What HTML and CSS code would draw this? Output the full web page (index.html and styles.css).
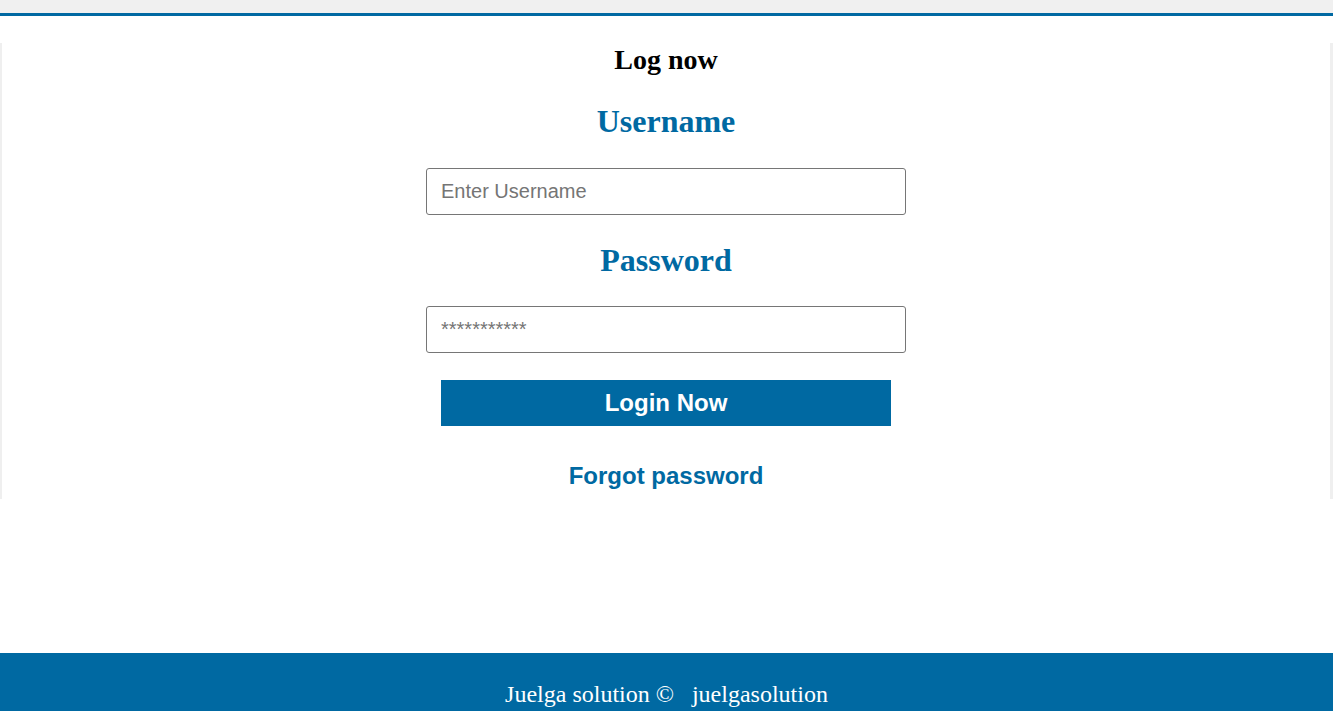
FILE: index.html
```html
<!DOCTYPE html>
<html lang="en">
<head>
<meta charset="utf-8">
<title>Log now</title>
<link rel="stylesheet" href="styles.css">
</head>
<body>
<div class="topbar"></div>
<main class="panel">
  <h2 class="title">Log now</h2>
  <h1 class="label">Username</h1>
  <input class="field" type="text" placeholder="Enter Username">
  <h1 class="label label-gap">Password</h1>
  <input class="field field-gap" type="password" placeholder="***********">
  <button class="login" type="button">Login Now</button>
  <a class="forgot" href="#">Forgot password</a>
</main>
<footer class="footer">Juelga solution ©&nbsp;&nbsp; juelgasolution</footer>
</body>
</html>
```
FILE: styles.css
```css
html, body {
  margin: 0;
  padding: 0;
  background: #ffffff;
  font-family: "Liberation Serif", "Times New Roman", serif;
  overflow: hidden;
}

.topbar {
  height: 13px;
  background: #f0f0f0;
  border-bottom: 3px solid #0069a2;
}

.panel {
  margin-top: 27px;
  border-left: 2px solid #efefef;
  border-right: 3px solid #efefef;
  padding: 1px 0 9px;
  display: flex;
  flex-direction: column;
  align-items: center;
}

.title {
  margin: 0;
  font-size: 28px;
  font-weight: bold;
  color: #000000;
  line-height: 32px;
}

.label {
  margin: 27px 0 0;
  font-size: 32px;
  font-weight: bold;
  color: #0069a2;
  line-height: 37px;
}

.label-gap {
  margin-top: 27px;
}

.field {
  box-sizing: border-box;
  margin-top: 28px;
  width: 480px;
  height: 47px;
  padding: 0 14px;
  border: 1px solid #767676;
  border-radius: 3px;
  font-family: "Liberation Sans", Arial, sans-serif;
  font-size: 20px;
  color: #333333;
  outline: none;
}

.field-gap {
  margin-top: 27px;
}

.field::placeholder {
  color: #757575;
}

.login {
  margin-top: 27px;
  width: 450px;
  height: 46px;
  border: none;
  background: #0069a2;
  color: #ffffff;
  font-family: "Liberation Sans", Arial, sans-serif;
  font-size: 24px;
  font-weight: bold;
  cursor: pointer;
}

.forgot {
  margin-top: 36px;
  font-family: "Liberation Sans", Arial, sans-serif;
  font-size: 24px;
  font-weight: bold;
  color: #0069a2;
  text-decoration: none;
  line-height: 28px;
}

.footer {
  margin-top: 154px;
  background: #0069a2;
  color: #ffffff;
  text-align: center;
  font-size: 24px;
  padding: 28px 0 30px;
}
```
